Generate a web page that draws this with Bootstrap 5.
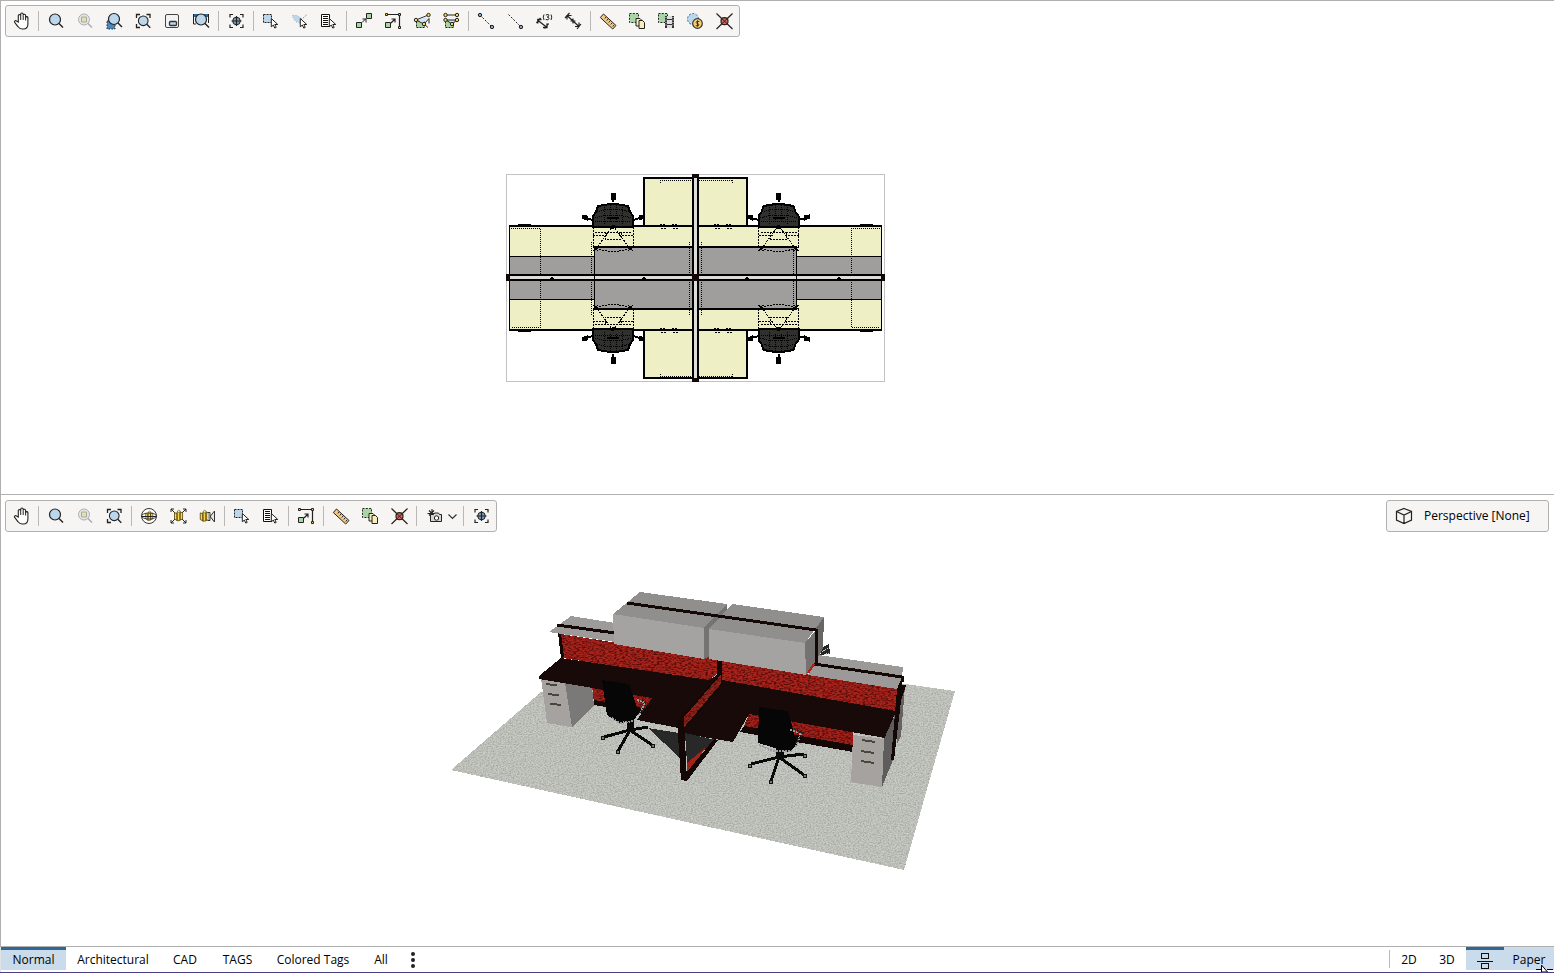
<!DOCTYPE html>
<html lang="en">
<head>
<meta charset="utf-8">
<meta name="viewport" content="width=device-width, initial-scale=1">
<title>Workstation views</title>
<link rel="stylesheet" href="https://cdn.jsdelivr.net/npm/bootstrap@5.3.0/dist/css/bootstrap.min.css">
<style>
  :root { --edge: #b0b0b0; --panel: #f6f5f4; --active: #cadcec; --accent: #2f6795; }
  body { font-family: "Open Sans", "Noto Sans", sans-serif; font-size: 12px; line-height: 16px; color: #000; background: #fff; }
  .view { border-top: 1px solid var(--edge); border-left: 1px solid var(--edge); min-height: 0; padding: 4px 5px 4px 4px; }
  .view-plan { flex: 485 1 0; }
  .view-model { flex: 442 1 0; padding-top: 5px; }
  .scene { position: absolute; inset: 0; width: 100%; height: 100%; }
  .tools { position: relative; height: 32px; padding: 0 0 0 1px; background: var(--panel); border: 1px solid var(--edge); border-radius: 3px; }
  .tool { width: 29px; height: 30px; padding: 0; border: 0; background: none; display: flex; align-items: center; justify-content: center; }
  .tool:hover { background: var(--active); }
  .tool svg { width: 19px; height: 20px; display: block; }
  .tool-wide { width: 41px; }
  .tool-wide svg { width: 37px; }
  .rule { width: 1px; height: 20px; margin: 0 3px 0 2px; background: #b8b8b8; }
  .camera { position: relative; width: 163px; height: 32px; padding: 0 8px; gap: 11px; border: 1px solid var(--edge); border-radius: 3px; background: var(--panel); color: #000; white-space: nowrap; }
  .foot { border-top: 1px solid var(--edge); border-bottom: 1px solid #4b3f86; height: 27px; }
  .tab { height: 23px; padding: 2px 0 0; border: 0; background: #fff; color: #000; text-align: center; white-space: nowrap; }
  .tab-on, .tab-lit { background: var(--active); }
  .tab-on { box-shadow: inset 0 3px var(--accent); }
  .w-a { width: 38px; } .w-all { width: 40px; } .w-b { width: 50px; } .w-c { width: 55px; } .w-d { width: 65px; } .w-e { width: 94px; } .w-f { width: 96px; }
  .foot-rule { width: 1px; height: 18px; margin-top: 3px; background: #b8b8b8; }
  .dots { margin: 1px 8px 0; }
  .pointer { position: absolute; right: 0; bottom: 0; pointer-events: none; }
</style>
</head>
<body class="vh-100 overflow-hidden d-flex flex-column">

<svg width="0" height="0" class="position-absolute" aria-hidden="true">
  <defs>
    <g id="lens"><circle cx="8" cy="8.5" r="5.5" fill="#bcd7ec" stroke="#222" stroke-width="1.2"/><path d="M12 12.5l4 4" stroke="#222" stroke-width="1.5"/></g>
    <g id="arrow"><path d="M9.300 7.500v8.300l2-1.700 1.500 3 1.400-.7-1.400-2.900h3z" fill="#fff" stroke="#222"/></g>
    <g id="ends" fill="#fdd752" stroke="#222" stroke-width="1"><circle cx="0" cy="0" r="1.700"/></g>
    <symbol id="i-hand" viewBox="0 0 19 20"><path d="M6.300 11V4.800a1.200 1.200 0 0 1 2.400 0V3.300a1.200 1.200 0 0 1 2.500 0v1.200a1.200 1.200 0 0 1 2.400 0v2a1.200 1.200 0 0 1 2.300 0V13c0 3.400-1.600 5-4.600 5h-1.200c-2 0-3-.8-4-2.200l-3.400-4.400c-.8-1.200.7-2.300 1.800-1.300z" fill="#fff" stroke="#222" stroke-width="1.100"/><path d="M8.700 4.500V9m2.500-4.500V9m2.400-3v3.500" stroke="#222" fill="none"/></symbol>
    <symbol id="i-zoom" viewBox="0 0 19 20"><use href="#lens"/></symbol>
    <symbol id="i-zoomsel" viewBox="0 0 19 20"><circle cx="8" cy="8.500" r="5.500" fill="#e3e7ea" stroke="#aeaeae"/><path d="M5.500 6h5v5h-5z" fill="#e0e2a8" stroke="#a9a9a0"/><path d="M12 12.500l4 4" stroke="#aaa" stroke-width="1.500"/></symbol>
    <symbol id="i-zoomarea" viewBox="0 0 19 20"><path d="M2 10h8v8H2z" fill="#4d86bb" stroke="#17324d" stroke-dasharray="1.500 1.500"/><use href="#lens" x="1" y="-.5"/></symbol>
    <symbol id="i-zoomfit" viewBox="0 0 19 20"><path d="M2.500 7V3.500H6M12.500 3.500H16V7M2.500 13v3.500H6" fill="none" stroke="#222" stroke-width="1.300"/><g transform="translate(2.200 2.300) scale(.88)"><use href="#lens"/></g></symbol>
    <symbol id="i-mini" viewBox="0 0 19 20"><rect x="2.500" y="3.500" width="13" height="13" rx="1.500" fill="#f2f2f2" stroke="#444"/><rect x="6.500" y="10.500" width="7" height="4" rx="1" fill="#bcd7ec" stroke="#333" stroke-width="1.300"/></symbol>
    <symbol id="i-zoomwin" viewBox="0 0 19 20"><path d="M1 3h16v3H1z" fill="#2f6795"/><path d="M1.500 3v10H4m12.500-10v9" fill="none" stroke="#222"/><use href="#lens" x="1"/></symbol>
    <symbol id="i-target" viewBox="0 0 19 20"><path d="M3 6.500V3.500h3M13 3.500h3v3M3 13.500v3h3m7 0h3v-3" fill="none" stroke="#222" stroke-width="1.200"/><circle cx="9.500" cy="10" r="3.800" fill="#7f9db8" stroke="#222"/><path d="M9.500 5v10M4.500 10h10" stroke="#222" stroke-width="1.200"/></symbol>
    <symbol id="i-selrect" viewBox="0 0 19 20"><path d="M1.500 3.500h8v8h-8z" fill="#bcd7ec" stroke="#222" stroke-dasharray="2 1"/><use href="#arrow"/></symbol>
    <symbol id="i-sellasso" viewBox="0 0 19 20"><path d="M1.500 4.500q5-1 9 3l-1 4.500q-6 0-8-7.500" fill="#bcd7ec" stroke="#99a" stroke-dasharray="1 2"/><path d="M10 9l6.500-6" stroke="#777" stroke-dasharray="1.500 1.500"/><use href="#arrow"/></symbol>
    <symbol id="i-sellist" viewBox="0 0 19 20"><path d="M1.500 3.500h8v12h-8z" fill="#fff" stroke="#111"/><path d="M3 5.500h5M3 7.500h5M3 9.500h5M3 11.500h5M3 13.500h5" stroke="#111"/><use href="#arrow"/></symbol>
    <symbol id="i-move" viewBox="0 0 19 20"><path d="M1.500 11.500h5v5h-5zM11.500 2.500h5v5h-5z" fill="#a9d5a5" stroke="#222"/><path d="M7 11.500l3.500-3.500M7.500 8H11v3.500" fill="none" stroke="#222"/></symbol>
    <symbol id="i-scale" viewBox="0 0 19 20"><path d="M1.500 11.500h5v5h-5z" fill="#a9d5a5" stroke="#222"/><path d="M7 12l3.500-3.500M7.500 8H11v3.500M3 3.500h12.500V17" fill="none" stroke="#222" stroke-width="1.200"/><path d="M1.500 2.500h2v2h-2zM14.500 2.500h2v2h-2zM14.500 15.500h2v2h-2z" fill="#fdd752" stroke="#222"/></symbol>
    <symbol id="i-angle" viewBox="0 0 19 20"><path d="M3.500 9.500h8v7h-8z" fill="#a9d5a5" stroke="#222" stroke-dasharray="2 1"/><path d="M3 9l12.500-5M16 12.500v-5l-5 5.500 4 3.500M3 9l8 4" fill="none" stroke="#222"/><path d="M5 9l8-3.500 1 2.500-4 4z" fill="#d2e6f5"/><use href="#ends" x="3" y="9"/><use href="#ends" x="15.500" y="4"/><use href="#ends" x="11" y="13"/></symbol>
    <symbol id="i-align" viewBox="0 0 19 20"><path d="M3.500 9.500h8v7h-8z" fill="#a9d5a5" stroke="#222" stroke-dasharray="2 1"/><path d="M4 4h11M4 9h11l-5 4z" fill="#d2e6f5" stroke="#222"/><use href="#ends" x="3.500" y="4"/><use href="#ends" x="15" y="4"/><use href="#ends" x="3.500" y="9"/><use href="#ends" x="15" y="9"/><use href="#ends" x="10" y="13"/></symbol>
    <symbol id="i-seg" viewBox="0 0 19 20"><path d="M3 4l12 12" stroke="#222" stroke-dasharray="2 1.500"/><circle cx="3" cy="4" r="1.700" fill="#7fa6c9" stroke="#222"/><circle cx="15" cy="16" r="1.700" fill="#7fa6c9" stroke="#222"/></symbol>
    <symbol id="i-segend" viewBox="0 0 19 20"><path d="M2.500 3.500L15 16" stroke="#222" stroke-dasharray="2 1.500"/><circle cx="15" cy="16" r="1.700" fill="#7fa6c9" stroke="#222"/></symbol>
    <symbol id="i-dimnum" viewBox="0 0 19 20"><path d="M3 9.500l8.500 6.500M6.500 8.500H2.800v4M12 12.500v4H8M5.500 7l-4 5m12 .5L9.500 17.500" fill="none" stroke="#222" stroke-width="1.300"/><path d="M9 3.500q-1.500 2.500 0 5.500M16 3.500q1.500 2.500 0 5.500M10.800 4q3.500-1.500 3 .8-.3 1.200-1.600 1.200 2 .2 1.800 1.700-.5 2-3.300.7" fill="none" stroke="#222"/></symbol>
    <symbol id="i-dim" viewBox="0 0 19 20"><path d="M3 4.500L15 15.500M3 8.500v-4h4.500M11 15.500h4v-4M1 7l4.500-5m7.500 16l4-5M9 7.500v5m-2.500-2.500h5" fill="none" stroke="#222" stroke-width="1.200"/></symbol>
    <symbol id="i-ruler" viewBox="0 0 19 20"><path d="M4.500 3L17 14.500 13.700 18 1.300 6.500z" fill="#f4ca82" stroke="#222"/><path d="M7 6L5.800 7.500M9 8L7.800 9.500M11 10l-1.200 1.500M13 12l-1.200 1.500M15 14l-1.200 1.500" stroke="#222"/></symbol>
    <symbol id="i-copy" viewBox="0 0 19 20"><path d="M1.500 2.500h9v9h-9z" fill="#a9d5a5" stroke="#222" stroke-dasharray="2 1.300"/><path d="M8 7.500h4l2 2V15H8z" fill="#f5eebc" stroke="#222"/><path d="M11 9.500h3.500l2 2v6H11z" fill="#f5eebc" stroke="#222"/></symbol>
    <symbol id="i-film" viewBox="0 0 19 20"><path d="M1.500 2.500h9v9h-9z" fill="#a9d5a5" stroke="#222" stroke-dasharray="2 1.300"/><path d="M8 5h9v12H8z" fill="#ddd"/><path d="M9 5v12m7-12v12" stroke="#333" stroke-width="2"/><path d="M9 8.500h7M9 13.500h7" stroke="#333"/><path d="M9 6v10m7-10v10" stroke="#eee" stroke-dasharray="1 1.500"/></symbol>
    <symbol id="i-coin" viewBox="0 0 19 20"><circle cx="7" cy="8" r="5.500" fill="#bcd7ec" stroke="#49647c" stroke-dasharray="2 1.500"/><circle cx="11.500" cy="12.500" r="4.800" fill="#fbd070" stroke="#333" stroke-width="1.200"/><path d="M13.300 10.500h-2.600q-1 1 0 1.800l1.700.5q1 1 0 1.900H9.700M11.500 9.300v6.400" fill="none" stroke="#333"/></symbol>
    <symbol id="i-cross" viewBox="0 0 19 20"><path d="M1.500 2.500l16 15.500m0-15.500L1.500 18" stroke="#222" stroke-width="1.200"/><circle cx="9.500" cy="10.200" r="3.500" fill="#d96259" stroke="#222" stroke-width="1.200"/><path d="M7 7.700l5 5m0-5l-5 5" stroke="#222"/></symbol>
    <g id="boxes"><path d="M6 6.500l3 1v8l-3-1.500zM9 5.500l3.500-1v11L9 16zM12.500 6.500l3-.5v8l-3 1z" fill="#fcd84f" stroke="#4b3c08" stroke-width=".9"/><path d="M9 5l2-1.500 2 1.500-2 1.500z" fill="#ffec86" stroke="#4b3c08" stroke-width=".6"/></g>
    <symbol id="i-orbit" viewBox="0 0 19 20"><circle cx="9" cy="10" r="7.500" fill="#fff" stroke="#333"/><g transform="translate(1.200 2.500) scale(.75)"><use href="#boxes"/></g><ellipse cx="9" cy="10" rx="7.500" ry="3" fill="none" stroke="#444"/><path d="M1.500 10.500h15" stroke="#222"/></symbol>
    <symbol id="i-explode" viewBox="0 0 19 20"><path d="M2 6V3h3M2 3l4 4M14 3h3v3M17 3l-4 4M2 14v3h3m-3 0l4-4m8 4h3v-3m0 3l-4-4" fill="none" stroke="#222"/><g transform="translate(.4 1.200) scale(.85)"><use href="#boxes"/></g></symbol>
    <symbol id="i-walk" viewBox="0 0 19 20"><g transform="translate(-3 1.200) scale(.88)"><use href="#boxes"/></g><path d="M9.500 6.500H12v8H9.500M12.500 10l4-5v11l-4-5z" fill="#ddd" fill-opacity=".6" stroke="#333"/></symbol>
    <symbol id="i-shot" viewBox="0 0 37 20"><path d="M10 3v9M5.500 7.500h8M7 4.500l5 5m0-5l-5 5" stroke="#222" stroke-width="1.100"/><path d="M8.500 8.500h3l1-1.500h4l1 1.500h2v7h-11z" fill="#d5d5d5" stroke="#222"/><circle cx="14.500" cy="12" r="2.200" fill="#fff" stroke="#222"/><path d="M26.500 8.500l4 4 4-4" fill="none" stroke="#333" stroke-width="1.200"/></symbol>

    <!-- office chair seen from above, origin at the seat centre line -->
    <g id="chair-top">
      <path d="M0-82v6M-27-60l7 2M27-60l-7 2" stroke="#000" stroke-width="2"/>
      <path d="M-2-85h4v6h-4zM-31-63l5 1v4l-5-2zM31-63l-5 1v4l5-2z" stroke="#000" stroke-width="1"/>
      <path d="M-15-72l6-1q9-2 18 0l6 1 2 6 3 4v11h-40v-11l3-4z" fill="#30302f" stroke="#000" stroke-width="2"/>
      <path d="M-16-66q16-6 32 0M-18-60q18-6 36 0M-18-57h36M-9-73v19M9-73v19M-3-73v18M3-73v18" fill="none" stroke="#000" stroke-dasharray="1 1"/>
      <path d="M-6-61H6v2H-6z"/>
      <path d="M-20-51v20M20-51v20M-20-43h14M20-43H6M-18-46h10M18-46H8M-2-50l-15 21M2-50l15 21M-8-46v7h16v-7z" fill="none" stroke="#000" stroke-dasharray="2 1"/>
      <path d="M-17-30q17 7 34 0M-17-30q17-3 34 0" fill="none" stroke="#000" stroke-dasharray="2 1"/>
      <path d="M-20-31l5 4m-5 0l5-5M20-31l-5 4m5 0l-5-5" stroke="#000"/>
      <circle cy="-51" r="2"/>
    </g>
    <filter id="grain" x="0" y="0" width="100%" height="100%" color-interpolation-filters="sRGB">
      <feTurbulence type="fractalNoise" baseFrequency=".6 .9" numOctaves="2" seed="4"/>
      <feColorMatrix values="0 0 0 0 .2  0 0 0 0 .2  0 0 0 0 .18  .55 0 0 0 -.2"/>
      <feComposite in2="SourceGraphic" operator="in" result="n"/>
      <feMerge><feMergeNode in="SourceGraphic"/><feMergeNode in="n"/></feMerge>
    </filter>
    <filter id="weave" x="0" y="0" width="100%" height="100%" color-interpolation-filters="sRGB">
      <feTurbulence type="fractalNoise" baseFrequency=".35 .7" numOctaves="2" seed="9"/>
      <feColorMatrix values="0 0 0 0 .2  0 0 0 0 0  0 0 0 0 0  2 0 0 0 -.8"/>
      <feComposite in2="SourceGraphic" operator="in" result="n"/>
      <feMerge><feMergeNode in="SourceGraphic"/><feMergeNode in="n"/></feMerge>
    </filter>
  </defs>
</svg>

<section class="view view-plan position-relative d-flex align-items-start" aria-label="2D view">
  <svg class="scene" viewBox="1 1 1553 493" role="img" aria-label="Floor plan of four workstations">
    <g shape-rendering="crispEdges">
      <rect x="506.500" y="174.500" width="378" height="207" fill="#fff" stroke="#c2c2c2"/>
      <path d="M644 178h103v200H644zM510 226h372v104H510z" fill="#eeefc5"/>
      <path d="M510 256h372v43H510zM594 247h203v62H594z" fill="#9f9e9d"/>
      <path d="M644 226v-48h103v48M644 330v48h103v-48" fill="none" stroke="#000" stroke-width="2"/>
      <path d="M509.500 226v104M881.500 226v104M510 256.500h85M797 256.500h85M510 299.500h85M797 299.500h85M594.500 246v64M796.500 246v64" stroke="#000"/>
      <path d="M509 226h373M509 330h373M594 247h203M594 309h203" stroke="#000" stroke-width="2"/>
      <path d="M511 228.500h29.500v99H511M880 228.500h-28.500v99H880M591.500 242v73M689.500 242v73M701.500 242v73M793.500 249v59M660 180.500h33M699 180.500h33M660 376.500h33M699 376.500h33M660 180v3M732 180v3M660 374v3M732 374v3" fill="none" stroke="#000" stroke-dasharray="1 1"/>
      <path d="M660 224.500h6m0 4h-6m12-4h6m0 4h-6m42-4h6m0 4h-6m12-4h6m0 4h-6M660 328.500h6m0 4h-6m12-4h6m0 4h-6m42-4h6m0 4h-6m12-4h6m0 4h-6" stroke="#000" stroke-dasharray="2 1"/>
      <path d="M518 224.500h13M860 224.500h13M518 331.500h13M860 331.500h13" stroke="#000" stroke-width="1"/>
      <use href="#chair-top" transform="translate(613 278)"/>
      <use href="#chair-top" transform="translate(778.500 278)"/>
      <use href="#chair-top" transform="translate(613 278) scale(1 -1)"/>
      <use href="#chair-top" transform="translate(778.500 278) scale(1 -1)"/>
      <path d="M507 275h378v5H507z" fill="#dcdcdb"/>
      <path d="M507 275h378M507 280h378" stroke="#000" stroke-width="2"/>
      <path d="M594.500 274v7M796.500 274v7" stroke="#000"/>
      <path d="M693 175h6v206h-6z" fill="#dcdcdb"/>
      <path d="M693 175v206M698 175v206" stroke="#000" stroke-width="2"/>
      <path d="M506 274h4v7h-4zM881 274h4v7h-4zM692 274h7v7h-7zM692 174h7v4h-7zM692 378h7v4h-7z" fill="#130807"/>
      <path d="M550 279l2-3 2 3zM642 279l2-3 2 3zM745 279l2-3 2 3zM837 279l2-3 2 3z"/>
    </g>
  </svg>
  <div class="tools d-flex align-items-center" role="toolbar" aria-label="2D tools">
    <button class="tool" aria-label="Pan"><svg><use href="#i-hand"/></svg></button>
    <span class="rule"></span>
    <button class="tool" aria-label="Zoom"><svg><use href="#i-zoom"/></svg></button>
    <button class="tool" aria-label="Zoom selection" disabled><svg><use href="#i-zoomsel"/></svg></button>
    <button class="tool" aria-label="Zoom area"><svg><use href="#i-zoomarea"/></svg></button>
    <button class="tool" aria-label="Zoom fit"><svg><use href="#i-zoomfit"/></svg></button>
    <button class="tool" aria-label="Overview"><svg><use href="#i-mini"/></svg></button>
    <button class="tool" aria-label="Zoom window"><svg><use href="#i-zoomwin"/></svg></button>
    <span class="rule"></span>
    <button class="tool" aria-label="Center"><svg><use href="#i-target"/></svg></button>
    <span class="rule"></span>
    <button class="tool" aria-label="Select area"><svg><use href="#i-selrect"/></svg></button>
    <button class="tool" aria-label="Select lasso"><svg><use href="#i-sellasso"/></svg></button>
    <button class="tool" aria-label="Select from list"><svg><use href="#i-sellist"/></svg></button>
    <span class="rule"></span>
    <button class="tool" aria-label="Move"><svg><use href="#i-move"/></svg></button>
    <button class="tool" aria-label="Move to"><svg><use href="#i-scale"/></svg></button>
    <button class="tool" aria-label="Rotate"><svg><use href="#i-angle"/></svg></button>
    <button class="tool" aria-label="Align"><svg><use href="#i-align"/></svg></button>
    <span class="rule"></span>
    <button class="tool" aria-label="Segment"><svg><use href="#i-seg"/></svg></button>
    <button class="tool" aria-label="End segment"><svg><use href="#i-segend"/></svg></button>
    <button class="tool" aria-label="Numeric dimension"><svg><use href="#i-dimnum"/></svg></button>
    <button class="tool" aria-label="Dimension"><svg><use href="#i-dim"/></svg></button>
    <span class="rule"></span>
    <button class="tool" aria-label="Measure"><svg><use href="#i-ruler"/></svg></button>
    <button class="tool" aria-label="Copy selection"><svg><use href="#i-copy"/></svg></button>
    <button class="tool" aria-label="Array"><svg><use href="#i-film"/></svg></button>
    <button class="tool" aria-label="Price"><svg><use href="#i-coin"/></svg></button>
    <button class="tool" aria-label="Snap point"><svg><use href="#i-cross"/></svg></button>
  </div>
</section>

<section class="view view-model position-relative d-flex align-items-start justify-content-between" aria-label="3D view">
  <svg class="scene" viewBox="1 495 1553 451" role="img" aria-label="Perspective of four workstations">
    <g shape-rendering="crispEdges">
      <path d="M451 770l90-78 160-30 204 22 50 7-51 179z" fill="#c8cac4" filter="url(#grain)"/>
      <!-- cabinet and lower panels, left -->
      <path d="M592 686l62 9v14l-60-6z" fill="#a3221b" filter="url(#weave)"/>
      <path d="M594 700l62 10v5l-62-10z" fill="#140807"/>
      <path d="M541 678l24 5 7 44-25-4z" fill="#a5a2a0"/><path d="M565 683l27 4 2 18-22 22z" fill="#7b7977"/>
      <path d="M546 684l11 1.500M548 694l11 1.500M550 703.500l11 1.500" stroke="#4a463b" stroke-width="2"/>
      <!-- privacy panels -->
      <path d="M561 634l145 23 12 2v14l-10 8-145-23z" fill="#a8241c" filter="url(#weave)"/>
      <path d="M720 658l87 16 90 14-1 24-174-29z" fill="#a8241c" filter="url(#weave)"/>
      <path d="M558 633h3l3 24-3 1z" fill="#140807"/>
      <!-- lower panel, right -->
      <path d="M750 712l103 19v15l-109-20z" fill="#a3221b" filter="url(#weave)"/>
      <path d="M744 726l109 19v7l-113-20z" fill="#140807"/>
      <!-- worktops -->
      <path d="M539 676l22-18 148 22 13-8-38 52-5 4-42-8 15-22-113-19z" fill="#170a09"/>
      <path d="M722 680l174 31-11 27-136-24-16 28-53-9v-8z" fill="#170a09"/>
      <path d="M717 660l5 1v24l-5 8z" fill="#140807"/>
      <path d="M684 717l37-43v11l-37 44z" fill="#8f251c" filter="url(#weave)"/>
      <path d="M681 719l40-46M684 729l38-45" stroke="#140807" stroke-width="2"/>
      <!-- centre frame -->
      <path d="M648 728l31 5 1 25zM685 733l31 7-29 24z" fill="#282828"/>
      <path d="M687 763l18-15-9 16-9 9z" fill="#a3221b"/>
      <path d="M714 739l4 1-31 41-1-8z" fill="#140807"/>
      <path d="M677 720h7l3 61-6-1z" fill="#140807"/>
      <!-- cabinet and end panel, right -->
      <path d="M905 686l-4 50-4 8 1-50z" fill="#656361"/>
      <path d="M853 735l31 4-2 48-31-5z" fill="#a5a2a0"/><path d="M884 739l12-27-3 48-11 27z" fill="#5f5d5b"/>
      <path d="M862 740l13 2M861 751l13 2M861 761l13 2" stroke="#4a463b" stroke-width="2"/>
      <path d="M902 677v8h4l-5 16-7 59h-3l6-71z" fill="#140807"/>
      <!-- low shelves -->
      <path d="M549 632l22-16 44 7v19z" fill="#9d9b99"/><path d="M557 625l58 8" stroke="#140807" stroke-width="3"/>
      <path d="M808 675l10-20 85 12-1 10-5 12z" fill="#9c9a98"/>
      <!-- far chair -->
      <path d="M820 655l3-8 6-3 1 10z" fill="#252525"/><path d="M822 652l7-5M824 655l5-2" stroke="#ccc" stroke-dasharray="1 1"/>
      <!-- overhead bins -->
      <path d="M704 628l23-24v6l-17 46-6 3z" fill="#757371"/>
      <path d="M613 614l27-22 87 12-23 24z" fill="#918f8d"/>
      <path d="M613 614l91 14v31l-90-15z" fill="#a5a3a2"/>
      <path d="M816 628l8-11-1 31-8 15z" fill="#696765"/>
      <path d="M805 643l12-14-1 34-10 12z" fill="#757371"/>
      <path d="M709 629l23-25 92 13-19 26z" fill="#918f8d"/>
      <path d="M709 629l96 14 1 32-97-16z" fill="#a5a3a2"/>
      <path d="M627 603l189 27v34M814 664l88 13v5" fill="none" stroke="#140807" stroke-width="3"/>
      <path d="M808 673l6-9" stroke="#a8241c" stroke-width="2"/>
      <!-- chairs -->
      <g fill="none" stroke="#090909" stroke-width="3">
        <path d="M630 716v14l-26 7M630 730l-12 21M630 730l22 15M630 730l18-3"/>
        <path d="M779 740v17l-28 7M779 757l-8 24M779 757l25 18M779 757l25-3"/>
      </g>
      <path d="M627 716h7v13h-7zM776 747h8v10h-8z" fill="#090909"/>
      <path d="M602 680l27 4 10 29-6 8-14 2-12-8z" fill="#060606"/>
      <path d="M759 707l29 4 9 34-8 7-31-9z" fill="#060606"/>
      <path d="M637 700l8 3-6 12M612 718l8 5 14-2M790 730l11 3-5 14M759 745l15 6 18 0" fill="none" stroke="#9a9a9a" stroke-width="2" stroke-dasharray="2 1"/>
      <path d="M642 700l6 4-8 9M794 729l9 4-7 10" fill="none" stroke="#222" stroke-width="2" stroke-dasharray="2 1"/>
      <g fill="#777" stroke="#111"><circle cx="603" cy="738" r="2"/><circle cx="618" cy="752" r="2"/><circle cx="653" cy="746" r="2"/><circle cx="750" cy="766" r="2"/><circle cx="771" cy="782" r="2"/><circle cx="805" cy="776" r="2"/><circle cx="805" cy="756" r="2"/></g>
    </g>
  </svg>
  <div class="tools d-flex align-items-center" role="toolbar" aria-label="3D tools">
    <button class="tool" aria-label="Pan"><svg><use href="#i-hand"/></svg></button>
    <span class="rule"></span>
    <button class="tool" aria-label="Zoom"><svg><use href="#i-zoom"/></svg></button>
    <button class="tool" aria-label="Zoom selection" disabled><svg><use href="#i-zoomsel"/></svg></button>
    <button class="tool" aria-label="Zoom fit"><svg><use href="#i-zoomfit"/></svg></button>
    <span class="rule"></span>
    <button class="tool" aria-label="Orbit"><svg><use href="#i-orbit"/></svg></button>
    <button class="tool" aria-label="Walk around"><svg><use href="#i-explode"/></svg></button>
    <button class="tool" aria-label="Look from"><svg><use href="#i-walk"/></svg></button>
    <span class="rule"></span>
    <button class="tool" aria-label="Select area"><svg><use href="#i-selrect"/></svg></button>
    <button class="tool" aria-label="Select from list"><svg><use href="#i-sellist"/></svg></button>
    <span class="rule"></span>
    <button class="tool" aria-label="Move to"><svg><use href="#i-scale"/></svg></button>
    <span class="rule"></span>
    <button class="tool" aria-label="Measure"><svg><use href="#i-ruler"/></svg></button>
    <button class="tool" aria-label="Copy selection"><svg><use href="#i-copy"/></svg></button>
    <button class="tool" aria-label="Snap point"><svg><use href="#i-cross"/></svg></button>
    <span class="rule"></span>
    <button class="tool tool-wide" aria-label="Render"><svg><use href="#i-shot"/></svg></button>
    <span class="rule"></span>
    <button class="tool" aria-label="Center"><svg><use href="#i-target"/></svg></button>
  </div>
  <button class="camera d-flex align-items-center">
    <svg width="18" height="18" viewBox="0 0 18 18" fill="none" stroke="#222" stroke-width="1.200"><path d="M9 1.500l7.500 3v8.500L9 16.500 1.500 13V4.500zM1.500 4.500L9 8l7.500-3.500M9 8v8.500"/></svg>
    <span>Perspective [None]</span>
  </button>
</section>

<footer class="foot position-relative d-flex">
  <nav class="d-flex ps-0 border-start" aria-label="Display modes">
    <button class="tab tab-on w-d">Normal</button>
    <button class="tab w-e">Architectural</button>
    <button class="tab w-b">CAD</button>
    <button class="tab w-c">TAGS</button>
    <button class="tab w-f">Colored Tags</button>
    <button class="tab w-all">All</button>
    <button class="tab" aria-label="More"><svg class="dots d-block" width="8" height="18" viewBox="0 0 8 18" fill="#222"><circle cx="4" cy="3" r="2"/><circle cx="4" cy="9" r="2"/><circle cx="4" cy="15" r="2"/></svg></button>
  </nav>
  <div class="d-flex ms-auto">
    <span class="foot-rule"></span>
    <button class="tab w-a">2D</button>
    <button class="tab w-a">3D</button>
    <button class="tab tab-on w-a" aria-label="Split view"><svg class="d-block mx-auto" width="18" height="18" viewBox="0 0 18 18" fill="none" stroke="#111" shape-rendering="crispEdges"><path d="M5.500 2.500h7v5h-7zM5.500 12.500h7v5h-7zM1 10h16"/></svg></button>
    <button class="tab tab-lit w-b">Paper</button>
  </div>
  <svg class="pointer" width="18" height="7" viewBox="0 0 18 7"><path d="M5.500 7V0l6 7z" fill="#fff" stroke="#000"/><path d="M0 4.500h5m6 0h6" stroke="#000"/></svg>
</footer>

<script src="https://cdn.jsdelivr.net/npm/bootstrap@5.3.0/dist/js/bootstrap.bundle.min.js"></script>
</body>
</html>
